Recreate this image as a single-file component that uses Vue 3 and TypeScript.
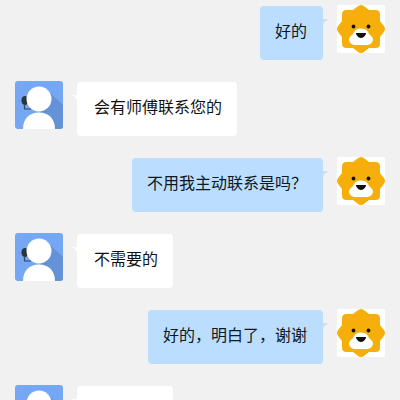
<script setup lang="ts">
interface Message {
  id: number
  from: 'agent' | 'user'
  text: string
}

const messages: Message[] = [
  { id: 1, from: 'user', text: '好的' },
  { id: 2, from: 'agent', text: '会有师傅联系您的' },
  { id: 3, from: 'user', text: '不用我主动联系是吗？' },
  { id: 4, from: 'agent', text: '不需要的' },
  { id: 5, from: 'user', text: '好的，明白了，谢谢' },
  { id: 6, from: 'agent', text: '' },
]
</script>

<template>
  <main class="chat">
    <article v-for="m in messages" :key="m.id" class="row" :class="m.from">
      <svg v-if="m.from === 'agent'" class="avatar" viewBox="0 0 48 48" aria-hidden="true">
        <rect width="48" height="48" rx="3" fill="#76a7f4" />
        <path d="M32 9 48 24V45q0 3-3 3H37L24 30z" fill="#6591d6" />
        <ellipse cx="10" cy="19.5" rx="3.6" ry="4.6" fill="#2b3440" />
        <path d="M9.5 23v5H16" fill="none" stroke="#34445c" stroke-width="1.2" />
        <circle cx="24" cy="18" r="12.5" fill="#fff" />
        <path d="M8 48C8 38 14 31.500 24 31.500s16 6.500 16 16.500z" fill="#fff" />
      </svg>
      <svg v-else class="avatar" viewBox="0 0 48 48" aria-hidden="true">
        <rect width="48" height="48" rx="2" fill="#fff" />
        <path
          d="M20.5 1.500Q24-1.500 27.500 1.500L32 5H38.500Q43 5 43 9.500V16L46.500 20.500Q49.500 24 46.500 27.500L43 32V38.500Q43 43 38.500 43H32L27.500 46.500Q24 49.500 20.500 46.500L16 43H9.500Q5 43 5 38.500V32L1.500 27.500Q-1.500 24 1.500 20.500L5 16V9.500Q5 5 9.500 5H16z"
          fill="#f5ae0a"
        />
        <circle cx="16.5" cy="21.5" r="1.9" fill="#17130c" />
        <circle cx="31.5" cy="21.5" r="1.9" fill="#17130c" />
        <path
          d="M24 23.500c4 0 6.500 2 7.500 4.500 1 2.500 4.500 3.500 4.500 6.500 0 3.500-3 5.500-7 5.500H19c-4 0-7-2-7-5.500 0-3 3.500-4 4.500-6.500 1-2.500 3.500-4.500 7.500-4.500z"
          fill="#fff"
        />
        <path d="M19.500 28h9q1 0 .5 1Q27 33 24 33T19 29q-.5-1 .5-1z" fill="#111" />
      </svg>
      <p class="bubble" :class="{ pending: !m.text }">
        {{ m.text }}
        <svg class="tail" viewBox="0 0 7 6" aria-hidden="true">
          <path d="M0 1Q4 2 7 0 3 2 0 6z" />
        </svg>
      </p>
    </article>
  </main>
</template>

<style>
body {
  background: #f1f1f1;
}
</style>

<style scoped>
.chat {
  box-sizing: border-box;
  height: 100vh;
  overflow: hidden;
  padding: 5px 15px 0;
  display: flex;
  flex-direction: column;
  gap: 21px;
  background: #f1f1f1;
  font-family: "Liberation Sans", "Noto Sans CJK SC", sans-serif;
}

.row {
  flex: none;
  display: flex;
  align-items: flex-start;
  gap: 14px;
}

.user {
  flex-direction: row-reverse;
}

.avatar {
  flex: none;
  width: 48px;
  height: 48px;
}

.bubble {
  position: relative;
  box-sizing: border-box;
  min-height: 54px;
  margin: 1px 0 0;
  padding: 14px 15px 16px 17px;
  border-radius: 4px;
  background: #fff;
  color: #111;
  font-size: 16px;
  line-height: 24px;
}

.user .bubble {
  padding: 14px 16px 16px 15px;
  background: #bcdefe;
  color: #0c1824;
}

.pending {
  width: 96px;
}

.tail {
  position: absolute;
  top: 12px;
  right: -7px;
  width: 7px;
  height: 6px;
  fill: #c3dfec;
}

.agent .tail {
  right: auto;
  left: -7px;
  fill: #fff;
  transform: scaleX(-1);
}
</style>
